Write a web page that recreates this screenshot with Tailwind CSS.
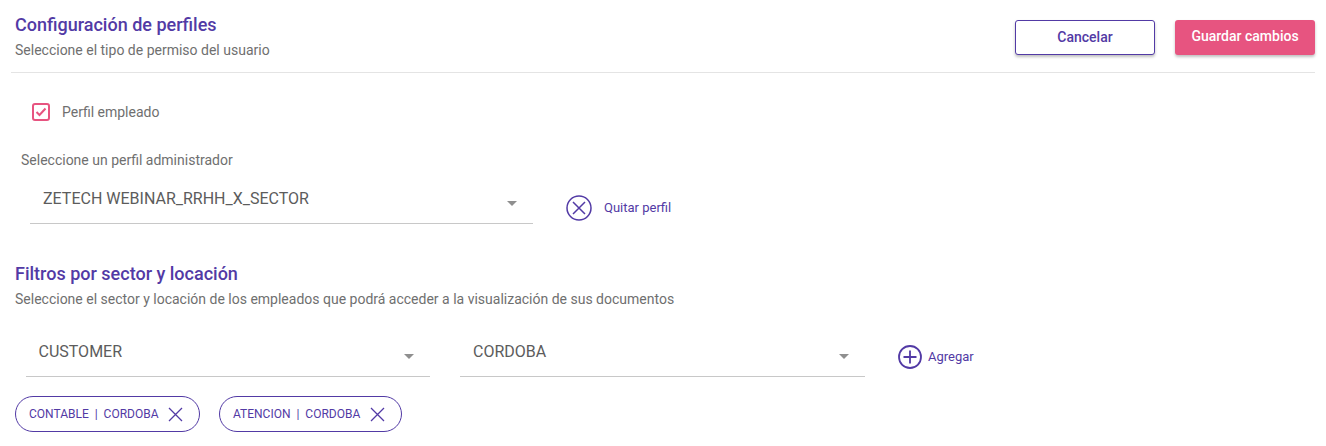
<!DOCTYPE html>
<html lang="en">
<head>
    <meta charset="UTF-8">
    <title>Configuración de perfiles</title>
    <script src="https://cdn.jsdelivr.net/npm/@tailwindcss/browser@4"></script>
</head>
<body class="bg-white font-['Roboto',sans-serif] h-[446px] overflow-hidden">
    <!-- Header -->
    <div class="mx-[11px] w-[1304px] h-[73px] border-b border-[#e4e4e4] flex justify-between">
        <div class="pl-[4px] pt-[14px]">
            <h1 class="text-[18px] leading-[22px] font-medium text-[#523aa5]">Configuración de perfiles</h1>
            <p class="text-[14px] leading-[18px] mt-[5px] text-[#6f6f6f]">Seleccione el tipo de permiso del usuario</p>
        </div>
        <div class="flex gap-[20px] pt-[20px]">
            <button class="w-[140px] h-[35px] bg-white border border-[#523aa5] rounded-[3px] shadow-[0_2px_3px_rgba(0,0,0,0.25)] text-[14px] font-medium text-[#523aa5]">Cancelar</button>
            <button class="w-[140px] h-[35px] pb-[2px] bg-[#e75480] rounded-[3px] shadow-[0_2px_3px_rgba(0,0,0,0.25)] text-[14px] font-medium text-white">Guardar cambios</button>
        </div>
    </div>

    <!-- Perfil -->
    <div class="flex items-center gap-[12px] pl-[32px] pt-[15px] h-[48px] box-content">
        <div class="w-[18px] h-[18px] border-2 border-[#e75480] rounded-[3px] flex items-center justify-center">
            <svg width="12" height="12" viewBox="0 0 12 12" fill="none" stroke="#e75480" stroke-width="2"><path d="M1.5 6l3 3L10.5 2.5"/></svg>
        </div>
        <span class="text-[14px] text-[#6f6f6f]">Perfil empleado</span>
    </div>
    <p class="pl-[21px] pt-[15px] text-[14px] leading-[18px] text-[#6f6f6f]">Seleccione un perfil administrador</p>
    <div class="flex items-end pl-[30px] h-[55px]">
        <div class="w-[503px] h-[55px] border-b border-[#c8c8c8] flex items-center justify-between pl-[13px] pr-[16px] pt-[5px]">
            <span class="text-[16px] text-[#5c5c5c]">ZETECH WEBINAR_RRHH_X_SECTOR</span>
            <span class="w-0 h-0 border-x-[5px] border-x-transparent border-t-[5px] border-t-[#8f8f8f] mt-[10px]"></span>
        </div>
        <button class="flex items-center gap-[12px] ml-[33px] mb-[3px] text-[13px] text-[#523aa5]">
            <svg width="26" height="26" viewBox="0 0 26 26" fill="none" stroke="#523aa5" stroke-width="1.5"><circle cx="13" cy="13" r="12"/><path d="M7 7l12 12M19 7L7 19"/></svg>
            Quitar perfil
        </button>
    </div>

    <!-- Filtros -->
    <div class="pl-[15px] pt-[39px]">
        <h2 class="text-[18px] leading-[22px] font-medium text-[#523aa5]">Filtros por sector y locación</h2>
        <p class="text-[14px] leading-[18px] mt-[5px] text-[#6f6f6f]">Seleccione el sector y locación de los empleados que podrá acceder a la visualización de sus documentos</p>
    </div>
    <div class="flex items-end pl-[26px] gap-[30px] h-[55px] mt-[14px]">
        <div class="w-[404px] h-[55px] border-b border-[#c8c8c8] flex items-center justify-between pl-[12.5px] pr-[16px] pt-[5px]">
            <span class="text-[16px] text-[#5c5c5c]">CUSTOMER</span>
            <span class="w-0 h-0 border-x-[5px] border-x-transparent border-t-[5px] border-t-[#8f8f8f] mt-[10px]"></span>
        </div>
        <div class="w-[405px] h-[55px] border-b border-[#c8c8c8] flex items-center justify-between pl-[13px] pr-[16px] pt-[5px]">
            <span class="text-[16px] text-[#5c5c5c]">CORDOBA</span>
            <span class="w-0 h-0 border-x-[5px] border-x-transparent border-t-[5px] border-t-[#8f8f8f] mt-[10px]"></span>
        </div>
        <button class="flex items-center gap-[6px] ml-[3px] mb-[8px] text-[13px] text-[#523aa5]">
            <svg width="24" height="24" viewBox="0 0 24 24" fill="none" stroke="#523aa5" stroke-width="1.8"><circle cx="12" cy="12" r="11"/><path d="M12 5.5v13M5.5 12h13"/></svg>
            Agregar
        </button>
    </div>

    <!-- Chips -->
    <div class="flex gap-[19px] pl-[15px] mt-[19px]">
        <div class="h-[36px] w-[185px] border border-[#523aa5] rounded-full flex items-center pl-[13px] gap-[10px] text-[12px] text-[#523aa5]">
            <span class="whitespace-pre">CONTABLE  |  CORDOBA</span>
            <svg width="15" height="15" viewBox="0 0 15 15" fill="none" stroke="#523aa5" stroke-width="1.3"><path d="M1 1l13 13M14 1L1 14"/></svg>
        </div>
        <div class="h-[36px] w-[183px] border border-[#523aa5] rounded-full flex items-center pl-[13px] gap-[10px] text-[12px] text-[#523aa5]">
            <span class="whitespace-pre">ATENCION  |  CORDOBA</span>
            <svg width="15" height="15" viewBox="0 0 15 15" fill="none" stroke="#523aa5" stroke-width="1.3"><path d="M1 1l13 13M14 1L1 14"/></svg>
        </div>
    </div>
</body>
</html>
